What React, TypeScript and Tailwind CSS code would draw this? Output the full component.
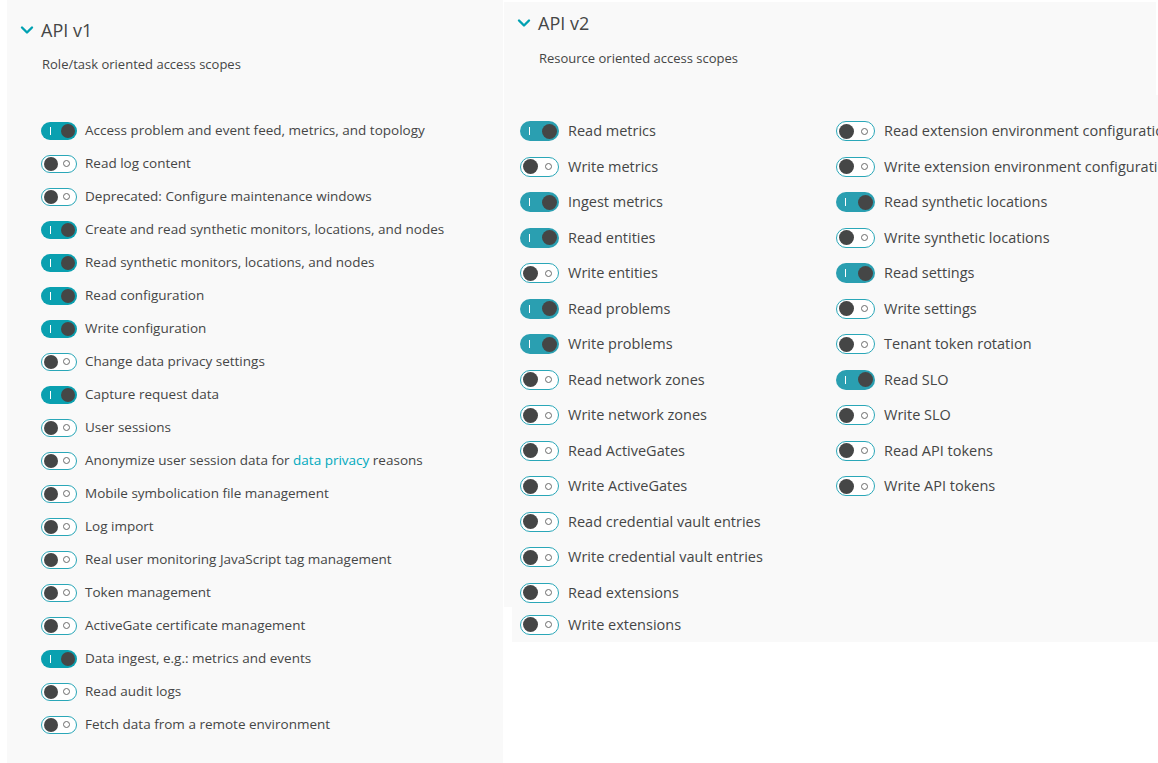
import type { ReactNode } from 'react';

type Scope = { label: ReactNode; on: boolean };

const v1Scopes: Scope[] = [
  { label: 'Access problem and event feed, metrics, and topology', on: true },
  { label: 'Read log content', on: false },
  { label: 'Deprecated: Configure maintenance windows', on: false },
  { label: 'Create and read synthetic monitors, locations, and nodes', on: true },
  { label: 'Read synthetic monitors, locations, and nodes', on: true },
  { label: 'Read configuration', on: true },
  { label: 'Write configuration', on: true },
  { label: 'Change data privacy settings', on: false },
  { label: 'Capture request data', on: true },
  { label: 'User sessions', on: false },
  {
    label: (
      <>
        Anonymize user session data for <span className="text-[#00a9bd]">data privacy</span> reasons
      </>
    ),
    on: false,
  },
  { label: 'Mobile symbolication file management', on: false },
  { label: 'Log import', on: false },
  { label: 'Real user monitoring JavaScript tag management', on: false },
  { label: 'Token management', on: false },
  { label: 'ActiveGate certificate management', on: false },
  { label: 'Data ingest, e.g.: metrics and events', on: true },
  { label: 'Read audit logs', on: false },
  { label: 'Fetch data from a remote environment', on: false },
];

const v2Left: Scope[] = [
  { label: 'Read metrics', on: true },
  { label: 'Write metrics', on: false },
  { label: 'Ingest metrics', on: true },
  { label: 'Read entities', on: true },
  { label: 'Write entities', on: false },
  { label: 'Read problems', on: true },
  { label: 'Write problems', on: true },
  { label: 'Read network zones', on: false },
  { label: 'Write network zones', on: false },
  { label: 'Read ActiveGates', on: false },
  { label: 'Write ActiveGates', on: false },
  { label: 'Read credential vault entries', on: false },
  { label: 'Write credential vault entries', on: false },
  { label: 'Read extensions', on: false },
  { label: 'Write extensions', on: false },
];

const v2Right: Scope[] = [
  { label: 'Read extension environment configuration', on: false },
  { label: 'Write extension environment configuration', on: false },
  { label: 'Read synthetic locations', on: true },
  { label: 'Write synthetic locations', on: false },
  { label: 'Read settings', on: true },
  { label: 'Write settings', on: false },
  { label: 'Tenant token rotation', on: false },
  { label: 'Read SLO', on: true },
  { label: 'Write SLO', on: false },
  { label: 'Read API tokens', on: false },
  { label: 'Write API tokens', on: false },
];

function Toggle({ on, large = false }: { on: boolean; large?: boolean }) {
  const box = large ? 'w-[39px] h-[20px]' : 'w-[36px] h-[18px]';
  const knob = large ? 'w-[15px] h-[15px]' : 'w-[14px] h-[14px]';
  if (on) {
    return (
      <span
        className={`${box} shrink-0 rounded-full flex items-center justify-between pl-[9px] pr-[2px] ${
          large ? 'bg-[#2a9fb1]' : 'bg-[#0aa0b0]'
        }`}
      >
        <span className="w-px h-[8px] bg-white" />
        <span className={`${knob} rounded-full bg-[#454646]`} />
      </span>
    );
  }
  return (
    <span
      className={`${box} shrink-0 rounded-full border-[1.5px] border-[#2aa7b8] bg-white flex items-center justify-between pl-[1.5px] pr-[6px]`}
    >
      <span className={`${knob} rounded-full bg-[#454646]`} />
      <span className="w-[7px] h-[7px] rounded-full border border-[#6b6b6b]" />
    </span>
  );
}

function Chevron() {
  return (
    <svg width="14" height="10" viewBox="0 0 14 10" className="shrink-0">
      <path d="M2 2.5 L7 7.5 L12 2.5" fill="none" stroke="#00a1b2" strokeWidth="2.4" strokeLinecap="round" strokeLinejoin="round" />
    </svg>
  );
}

// rows in the v2 list alternate 36px / 35px so they land on the same pixels as the screenshot
function Row({ scope, large = false, odd = false }: { scope: Scope; large?: boolean; odd?: boolean }) {
  const height = large ? (odd ? 'h-[35px]' : 'h-[36px]') : 'h-[33px]';
  return (
    <div className={`flex items-center shrink-0 ${height} ${large ? 'gap-[9px]' : 'gap-[8px]'}`}>
      <Toggle on={scope.on} large={large} />
      <span className={`whitespace-nowrap text-[#454646] ${large ? 'text-[14.5px]' : 'text-[13.5px]'}`}>{scope.label}</span>
    </div>
  );
}

export default function App() {
  return (
    <div
      className="w-[1158px] h-[763px] bg-white flex overflow-hidden"
      style={{ fontFamily: '"Open Sans", "Noto Sans", sans-serif' }}
    >
      <section className="ml-[7px] w-[496px] h-full bg-[#f9f9f9] flex flex-col shrink-0">
        <div className="flex items-center gap-[7px] pl-[13px] pt-[18px] h-[42px]">
          <Chevron />
          <h2 className="text-[18px] text-[#454646] leading-6">API v1</h2>
        </div>
        <p className="pl-[35px] mt-[13px] text-[13px] text-[#454646] leading-[18px]">Role/task oriented access scopes</p>
        <div className="pl-[34px] mt-[41px] flex flex-col">
          {v1Scopes.map((s, i) => (
            <Row key={i} scope={s} />
          ))}
        </div>
      </section>

      <section className="ml-[1px] flex-1 flex flex-col overflow-hidden">
        <div className="mt-[2px] w-[652px] h-[93px] bg-[#f9f9f9] shrink-0">
          <div className="flex items-center gap-[7px] pl-[13px] pt-[9px] h-[33px]">
            <Chevron />
            <h2 className="text-[18px] text-[#454646] leading-6">API v2</h2>
          </div>
          <p className="pl-[35px] mt-[14px] text-[13px] text-[#454646] leading-[18px]">Resource oriented access scopes</p>
        </div>
        <div className="bg-[#f9f9f9] h-[512px] shrink-0 flex items-start pt-[18px] pl-[16px] overflow-hidden">
          <div className="w-[316px] flex flex-col shrink-0">
            {v2Left.slice(0, 14).map((s, i) => (
              <Row key={i} scope={s} large odd={i % 2 === 1} />
            ))}
          </div>
          <div className="flex flex-col">
            {v2Right.map((s, i) => (
              <Row key={i} scope={s} large odd={i % 2 === 1} />
            ))}
          </div>
        </div>
        <div className="ml-[8px] h-[35px] shrink-0 bg-[#f9f9f9] pl-[8px] flex items-center">
          <Row scope={v2Left[14]} large />
        </div>
      </section>
    </div>
  );
}
